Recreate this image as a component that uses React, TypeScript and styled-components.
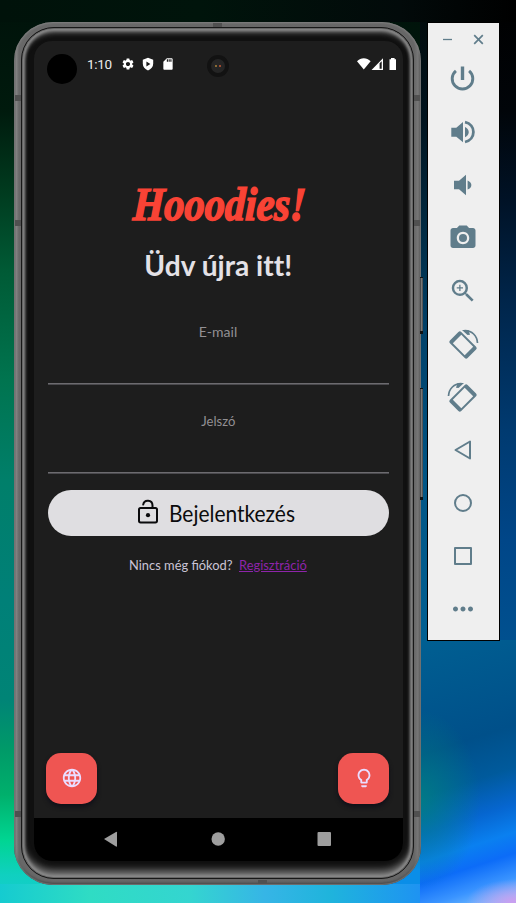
import React from "react";
import styled, { createGlobalStyle, css } from "styled-components";
import {
  MdPhotoCamera,
  MdZoomIn,
  MdSettings,
  MdLanguage,
  MdLightbulbOutline,
  MdMoreHoriz,
  MdSdCard,
} from "react-icons/md";

const Global = createGlobalStyle`
  * { box-sizing: border-box; }
  html, body { margin: 0; padding: 0; }
  body { width: 516px; height: 903px; overflow: hidden; background: #000; }
`;

const Desktop = styled.div`
  position: relative;
  display: flex;
  align-items: flex-start;
  width: 516px;
  height: 903px;
  padding: 22px 0 0 14px;
  overflow: hidden;
  background:
    linear-gradient(90deg, #00120a 0, #00140b 200px, #020a0a 400px, #000 516px) 0 0 / 516px 22px no-repeat,
    linear-gradient(90deg, #15cbd0 0, #2fdcc4 90px, #34d5d0 190px, #36b5e6 265px, #1fb4dc 330px, #1e93f2 420px) 0 884px / 420px 19px no-repeat,
    linear-gradient(180deg, #007f86, #0a8ee8 50px) 340px 820px / 80px 83px no-repeat,
    radial-gradient(ellipse 60px 90px at 0 160px, rgba(0, 135, 125, 0.7), transparent) 420px 640px / 96px 263px no-repeat,
    radial-gradient(ellipse 50px 24px at 96px 263px, #c8a0f0 10%, transparent) 420px 640px / 96px 263px no-repeat,
    linear-gradient(162deg, #005f92 0, #00508a 110px, #005a9c 150px, #0666d0 185px, #0a80f0 212px, #0c6cf8 232px, #3a94ff 255px, #74bcff 272px, #90b8ff 280px) 420px 640px / 96px 263px no-repeat,
    linear-gradient(180deg, #020a0a 0, #00131e 120px, #002a42 230px, #004068 330px, #005585 480px, #005f92 640px) 420px 0 / 8px 640px no-repeat,
    linear-gradient(180deg, #000 0, #010509 110px, #001226 200px, #00254a 300px, #003a70 430px, #004688 540px, #00508f 640px) 428px 0 / 88px 640px no-repeat,
    linear-gradient(180deg, #00120a 0, #001a0d 110px, #003a1e 190px, #005a35 270px, #00744f 380px, #007f6a 480px, #008078 600px, #008476 700px, #009a68 750px, #00b06c 795px, #00d592 840px, #10d0c0 875px, #15cbd0 903px) 0 0 / 420px 903px no-repeat;
`;

const Phone = styled.div`
  position: relative;
  flex: none;
  width: 407px;
  height: 863px;
  padding: 5px 7px 6px;
  border-radius: 39px;
  background: linear-gradient(90deg, #4a4a4a 0, #858585 2px, #686868 5px, #666 400px, #777 404px, #444 407px);
  box-shadow: inset 0 0 2px 1px #808080, inset 0 -2px 2px #333;
`;

const Bezel = styled.div`
  width: 100%;
  height: 100%;
  padding: 13px 12px 18px;
  border: 1px solid #181818;
  border-radius: 33px;
  background: #101010;
  box-shadow:
    inset 0 0 0 1px #666,
    inset 0 0 3px 3px #8a8a8a,
    inset 0 6px 5px -1px #5c5c5c,
    inset 0 -9px 7px -1px #747474;
`;

const Screen = styled.div`
  display: flex;
  flex-direction: column;
  width: 369px;
  height: 820px;
  overflow: hidden;
  border-radius: 18px;
  background: #1d1d1d;
`;

const StatusBar = styled.div`
  display: flex;
  align-items: center;
  height: 46px;
  padding: 0 6px 0 13px;
  color: #fff;
  svg { display: block; flex: none; }
`;

const Blob = styled.div`
  width: 30px;
  height: 30px;
  margin-top: 10px;
  border-radius: 50%;
  background: #000;
`;

const Clock = styled.span`
  width: 34px;
  margin-left: 10px;
  font: 400 13.5px/20px Roboto, sans-serif;
  letter-spacing: -0.3px;
  color: #ececec;
`;

const StatusIcons = styled.div`
  display: flex;
  align-items: center;
  gap: 6px;
  width: 87px;
`;

const Lens = styled.div`
  display: flex;
  align-items: center;
  justify-content: center;
  gap: 2px;
  width: 22px;
  height: 22px;
  margin: 3px auto 0 -1px;
  border: 4px solid #121212;
  border-radius: 50%;
  background: #252525;
`;

const Glint = styled.i<{ $color: string }>`
  width: 2px;
  height: 2px;
  background: ${(p) => p.$color};
`;

const Form = styled.main`
  display: flex;
  flex-direction: column;
  align-items: center;
  height: 666px;
  padding: 85px 15px 0 14px;
  font-family: Lato, sans-serif;
`;

const fitted = css<{ $scale: number; $width?: number }>`
  display: block;
  ${(p) => p.$width && `width: ${p.$width}px; transform-origin: 0 50%;`}
  white-space: nowrap;
  transform: scaleX(${(p) => p.$scale});
`;

const Brand = styled.h1`
  margin: 0 0 0 3px;
  height: 66px;
  color: #f94335;
  font: italic 700 47px/64px "Liberation Serif", serif;
  white-space: nowrap;
  transform: scaleX(0.86) skewX(-3deg);
  -webkit-text-stroke: 1.6px #f94335;
`;

const Greeting = styled.h2<{ $scale: number; $width?: number }>`
  ${fitted}
  margin: 7px 0 0;
  height: 40px;
  color: #e4e1e6;
  font: 700 29px/40px Lato, sans-serif;
  font-variant-ligatures: none;
`;

const Field = styled.label`
  display: flex;
  justify-content: center;
  width: 341px;
  height: 89px;
  padding-top: 26px;
  border-bottom: 1px solid #6c6b6f;
  box-shadow: 0 1px #4a494d;
  color: #929094;
  &:first-of-type { margin-top: 10px; }
`;

const FieldLabel = styled.span<{ $scale: number; $width?: number }>`
  ${fitted}
  font-size: 14px;
  line-height: 21px;
`;

const LoginButton = styled.button`
  display: flex;
  align-items: center;
  justify-content: center;
  gap: 6px;
  width: 341px;
  height: 46px;
  margin: 17px 0 0;
  padding: 0 7px 0 0;
  border: 0;
  border-radius: 23px;
  background: #dfdee1;
  color: #0b0b0d;
  font-family: Lato, sans-serif;
`;

const ButtonText = styled.span<{ $scale: number; $width?: number }>`
  ${fitted}
  text-align: left;
  font-size: 23px;
  line-height: 30px;
`;

const SignupLine = styled.p`
  display: flex;
  gap: 6px;
  margin: 19px 0 0;
  font-size: 14px;
  line-height: 20px;
  color: #cac4d6;
`;

const SignupText = styled.span<{ $scale: number; $width?: number }>`
  ${fitted}
`;

const SignupLink = styled.a<{ $scale: number; $width?: number }>`
  ${fitted}
  color: #8e24aa;
  text-decoration: underline;
`;

const FabRow = styled.div`
  display: flex;
  justify-content: space-between;
  padding: 0 14px 0 12px;
  height: 65px;
`;

const Fab = styled.button`
  display: flex;
  align-items: center;
  justify-content: center;
  width: 51px;
  height: 51px;
  padding: 0 0 1px 0;
  border: 0;
  border-radius: 15px;
  background: #ef5552;
  box-shadow: 0 3px 4px #101018;
  color: #eadcff;
`;

const NavBar = styled.nav`
  display: flex;
  align-items: center;
  height: 43px;
  background: #000;
  svg { display: block; }
`;

const SideButton = styled.div<{ $top: number; $height: number }>`
  position: absolute;
  left: 406px;
  top: ${(p) => p.$top}px;
  width: 3px;
  height: ${(p) => p.$height}px;
  border: solid #111;
  border-width: 1px 0 3px;
  background: linear-gradient(90deg, #333, #777, #444);
`;

const Antenna = styled.i<{ $x: number; $y: number; $w: number; $h: number }>`
  position: absolute;
  left: ${(p) => p.$x}px;
  top: ${(p) => p.$y}px;
  width: ${(p) => p.$w}px;
  height: ${(p) => p.$h}px;
  background: #505050;
`;

const Toolbar = styled.aside`
  flex: none;
  display: flex;
  flex-direction: column;
  align-items: center;
  width: 73px;
  height: 619px;
  margin: 0 0 0 6px;
  padding-right: 2px;
  border: 1px solid #000;
  background: #efefef;
  color: #607d8b;
  svg { display: block; }
`;

const WindowControls = styled.div`
  display: flex;
  align-items: center;
  justify-content: space-between;
  width: 42px;
  height: 29px;
  padding-top: 4px;
`;

const Tool = styled.div`
  display: flex;
  align-items: center;
  justify-content: center;
  width: 53px;
  height: 53px;
`;

const ShieldIcon = () => (
  <svg width="14" height="14" viewBox="0 0 14 14">
    <path fill="#fff" fillRule="evenodd" d="M7 .8 12.2 2.8v3.9c0 3-2.1 5.400-5.200 6.700-3.100-1.300-5.200-3.700-5.200-6.700V2.800zM5.400 4.400v5l4-2.500z" />
  </svg>
);

const SignalIcons = () => (
  <svg width="40" height="14" viewBox="0 0 40 14">
    <path fill="#fff" d="M0 4.200C3.800.3 9.800.3 13.600 4.200L6.800 12.400z" />
    <path fill="#fff" fillRule="evenodd" d="M14.500 13 26 1.200V13zM22.600 6.300V11.800H24.700V4.200z" />
    <path fill="#fff" d="M34 1h3.600v1.300H39V13h-6.500V2.300H34z" />
  </svg>
);

const UnlockIcon = () => (
  <svg width="30" height="30" viewBox="0 0 30 30" fill="none" stroke="#0b0b0d" strokeWidth="2">
    <rect x="6" y="10" width="18" height="14.400" rx="1.600" />
    <path d="M10.200 6.600a4.700 4.700 0 0 1 9.300.8v2.500" strokeLinecap="round" />
    <circle cx="15" cy="17.200" r="2.100" fill="#0b0b0d" stroke="none" />
  </svg>
);

const MinimizeIcon = () => (
  <svg width="11" height="11" viewBox="0 0 11 11" stroke="#607d8b" strokeWidth="1.300">
    <path d="M1 5.500h9" />
  </svg>
);

const CloseIcon = () => (
  <svg width="11" height="11" viewBox="0 0 11 11" stroke="#607d8b" strokeWidth="1.700">
    <path d="M1.200 1.200 9.800 9.800M9.800 1.200 1.200 9.800" />
  </svg>
);

const PowerIcon = () => (
  <svg width="27" height="27" viewBox="0 0 27 27" fill="none" stroke="#607d8b">
    <path d="M13.500 1.500v13.500" strokeWidth="3.400" />
    <path d="M6.900 5.800a10.300 10.300 0 1 0 13.200 0" strokeWidth="2.900" />
  </svg>
);

const VolumeIcon = ({ loud }: { loud?: boolean }) => (
  <svg width="28" height="28" viewBox="0 0 28 28" fill="currentColor">
    {loud ? (
      <>
        <path d="M2.300 9.700h5L14 4v20.200l-6.700-5.500h-5zM16 9c5 2.500 5 7.800 0 10.200z" />
        <path d="M16 4.200c11.200 2.300 11.200 17.500 0 19.800" fill="none" stroke="currentColor" strokeWidth="2.800" />
      </>
    ) : (
      <path d="M5 9.800h5l7-6.100v20.600l-7-6.100H5zM18.600 9.400c5 2 5 7.200 0 9.200z" />
    )}
  </svg>
);

const RotateIcon = ({ flip }: { flip?: boolean }) => (
  <svg width="32" height="32" viewBox="0 0 32 32">
    <g transform={flip ? "translate(32 0) scale(-1 1)" : undefined}>
      <path
        transform="translate(16 17) rotate(45)"
        fill="#607d8b"
        fillRule="evenodd"
        d="M-10.500-8h21a2 2 0 0 1 2 2V6a2 2 0 0 1-2 2h-21a2 2 0 0 1-2-2V-6a2 2 0 0 1 2-2zM-8.400-6V6H8.400V-6z"
      />
      <path d="M17.500 2.700c7.300-.3 12.700 5 13 12.300" fill="none" stroke="#607d8b" strokeWidth="1.700" />
      <path d="M15 2h6.500l1.500 4.800-2.500.3z" fill="#607d8b" />
    </g>
  </svg>
);

const ShapeIcon = ({ d }: { d: string }) => (
  <svg width="24" height="24" viewBox="0 0 24 24" fill="none" stroke="#607d8b" strokeWidth="2" strokeLinejoin="round">
    <path d={d} />
  </svg>
);

export default function App() {
  return (
    <>
      <Global />
      <Desktop>
        <Phone>
          <Bezel>
            <Screen>
              <StatusBar>
                <Blob />
                <Clock>1:10</Clock>
                <StatusIcons>
                  <MdSettings size={14} />
                  <ShieldIcon />
                  <MdSdCard size={14} />
                </StatusIcons>
                <Lens>
                  <Glint $color="#8a6b35" />
                  <Glint $color="#a04a30" />
                </Lens>
                <SignalIcons />
              </StatusBar>
              <Form>
                <Brand>Hooodies!</Brand>
                <Greeting $scale={0.97}>Üdv újra itt!</Greeting>
                <Field>
                  <FieldLabel $scale={1}>E-mail</FieldLabel>
                </Field>
                <Field>
                  <FieldLabel $scale={0.93}>Jelszó</FieldLabel>
                </Field>
                <LoginButton>
                  <UnlockIcon />
                  <ButtonText $scale={0.91} $width={127}>Bejelentkezés</ButtonText>
                </LoginButton>
                <SignupLine>
                  <SignupText $scale={0.92} $width={104}>Nincs még fiókod?</SignupText>
                  <SignupLink $scale={0.92} $width={68}>Regisztráció</SignupLink>
                </SignupLine>
              </Form>
              <FabRow>
                <Fab><MdLanguage size={22} /></Fab>
                <Fab><MdLightbulbOutline size={22} /></Fab>
              </FabRow>
              <NavBar>
                <svg width="369" height="43" viewBox="0 0 369 43" fill="#9e9e9e">
                  <path d="M70 21 82 14q1-.5 1 .5v13.500q0 1-1 .5z" />
                  <circle cx="184.200" cy="21" r="6.700" />
                  <rect x="283.500" y="14" width="13.500" height="14" rx="1" />
                </svg>
              </NavBar>
            </Screen>
          </Bezel>
          <SideButton $top={255} $height={57} />
          <SideButton $top={366} $height={112} />
          <Antenna $x={199} $y={1} $w={9} $h={4} />
          <Antenna $x={244} $y={858} $w={9} $h={4} />
          <Antenna $x={1} $y={73} $w={6} $h={6} />
          <Antenna $x={400} $y={73} $w={6} $h={6} />
          <Antenna $x={1} $y={198} $w={6} $h={6} />
          <Antenna $x={400} $y={198} $w={6} $h={6} />
          <Antenna $x={1} $y={789} $w={6} $h={6} />
          <Antenna $x={400} $y={789} $w={6} $h={6} />
        </Phone>
        <Toolbar>
          <WindowControls>
            <MinimizeIcon />
            <CloseIcon />
          </WindowControls>
          <Tool><PowerIcon /></Tool>
          <Tool><VolumeIcon loud /></Tool>
          <Tool><VolumeIcon /></Tool>
          <Tool><MdPhotoCamera size={30} /></Tool>
          <Tool><MdZoomIn size={30} /></Tool>
          <Tool><RotateIcon /></Tool>
          <Tool><RotateIcon flip /></Tool>
          <Tool><ShapeIcon d="M4.500 12 19 3.500v17z" /></Tool>
          <Tool><ShapeIcon d="M4 12a8 8 0 1 0 16 0 8 8 0 1 0-16 0z" /></Tool>
          <Tool><ShapeIcon d="M4 4h16v16H4z" /></Tool>
          <Tool><MdMoreHoriz size={30} /></Tool>
        </Toolbar>
      </Desktop>
    </>
  );
}
